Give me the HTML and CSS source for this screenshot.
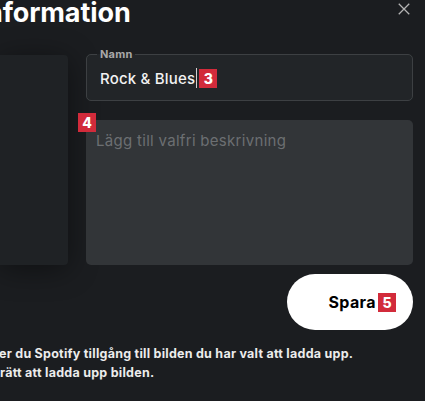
FILE: index.html
```html
<!DOCTYPE html>
<html lang="sv">
<head>
<meta charset="utf-8">
<title>Redigera information</title>
<link rel="stylesheet" href="styles.css">
</head>
<body>
<div class="dialog">
  <header class="head">
    <h1 class="title">nformation</h1>
    <button class="close" aria-label="Stäng">
      <svg viewBox="0 0 16 16" width="14" height="14"><path d="M2 2 L14 14 M14 2 L2 14" stroke="currentColor" stroke-width="1.5" fill="none"/></svg>
    </button>
  </header>
  <div class="content">
    <div class="cover"></div>
    <div class="fields">
      <fieldset class="name">
        <legend class="legend">Namn</legend>
        <div class="value"><span class="text">Rock &amp; Blues</span><span class="caret"></span><span class="badge">3</span></div>
      </fieldset>
      <div class="desc">
        <span class="badge badge-float">4</span>
        <div class="placeholder">Lägg till valfri beskrivning</div>
      </div>
    </div>
  </div>
  <div class="actions">
    <button class="save"><span>Spara</span><span class="badge">5</span></button>
  </div>
  <p class="note"><span class="l1">er du Spotify tillgång till bilden du har valt att ladda upp.</span><span class="l2">rätt att ladda upp bilden.</span></p>
</div>
</body>
</html>
```
FILE: styles.css
```css
html, body {
  margin: 0;
  padding: 0;
}
body {
  width: 425px;
  height: 401px;
  overflow: hidden;
  background: #1b1d20;
  font-family: Inter, Lato, "Noto Sans", sans-serif;
  color: #fff;
}
.dialog {
  width: 425px;
  padding-right: 12px;
  box-sizing: border-box;
}
.head {
  display: flex;
  justify-content: space-between;
  align-items: flex-start;
  height: 30px;
}
.title {
  margin: -4px 0 0 -14px;
  font-size: 27px;
  font-weight: 700;
  line-height: 34px;
  letter-spacing: -0.1px;
}
.close {
  background: none;
  border: 0;
  padding: 0;
  margin: 2px 2px 0 0;
  color: #b3b3b3;
  width: 14px;
  height: 14px;
  display: flex;
}
.content {
  display: flex;
  gap: 18px;
  margin-top: 17px;
}
.cover {
  width: 68px;
  height: 210px;
  margin-top: 8px;
  background: #1f2225;
  border-radius: 0 4px 4px 0;
  box-shadow: 0 4px 30px rgba(0,0,0,0.45);
}
.fields {
  flex: 1;
  display: flex;
  flex-direction: column;
  gap: 19px;
}
.name {
  margin: 0;
  padding: 0 12px 0 13px;
  border: 1px solid #3d4043;
  border-radius: 5px;
  height: 54px;
  box-sizing: border-box;
  background: #222528;
}
.legend {
  padding: 0 3px;
  margin-left: -3px;
  font-size: 11px;
  font-weight: 700;
  color: #a8a8a8;
  line-height: 14px;
  letter-spacing: 0.2px;
}
.value {
  display: flex;
  align-items: center;
  height: 24px;
  margin-top: 5px;
}
.text {
  font-size: 15px;
  color: #f2f2f2;
  font-weight: 500;
  letter-spacing: 0.2px;
}
.caret {
  width: 1px;
  height: 20px;
  background: #d0d0d0;
  margin: 0 2px 0 1px;
}
.badge {
  display: inline-flex;
  align-items: center;
  justify-content: center;
  width: 18px;
  height: 19px;
  background: #d22b3b;
  color: #fff;
  font-size: 14px;
  font-weight: 800;
  letter-spacing: 0;
}
.desc {
  position: relative;
  height: 145px;
  background: #323538;
  border-radius: 5px;
  padding: 11px 10px;
  box-sizing: border-box;
}
.badge-float {
  position: absolute;
  left: -8px;
  top: -7px;
}
.placeholder {
  font-size: 15px;
  color: #6c6f72;
  letter-spacing: 0.3px;
}
.actions {
  display: flex;
  justify-content: flex-end;
  margin-top: 9px;
}
.save {
  width: 126px;
  height: 56px;
  border: 0;
  border-radius: 28px;
  background: #fff;
  color: #000;
  font-family: inherit;
  font-size: 16px;
  font-weight: 700;
  display: flex;
  align-items: center;
  justify-content: flex-end;
  gap: 2px;
  padding: 0 17px 0 0;
  letter-spacing: 0.4px;
}
.note {
  margin: 14px 0 0 0;
  font-size: 12.5px;
  font-weight: 700;
  line-height: 19px;
  color: #ececec;
  letter-spacing: 0.25px;
}
.note span {
  display: block;
  white-space: nowrap;
}
.l1 { margin-left: -1px; }
.l2 { margin-left: 0; }
```
